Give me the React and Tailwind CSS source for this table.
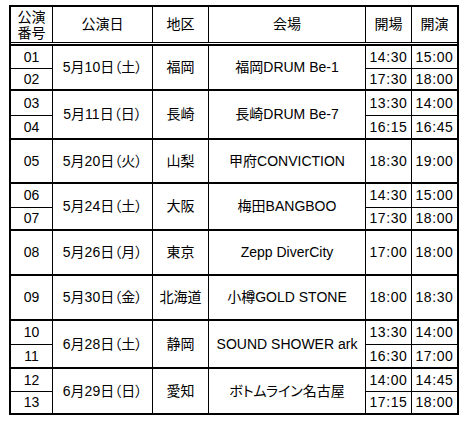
import React from "react";

const groups = [
  { nums: ["01", "02"], date: "5月10日（土）", area: "福岡", venue: "福岡DRUM Be-1", times: [["14:30", "15:00"], ["17:30", "18:00"]], h: [22, 21] },
  { nums: ["03", "04"], date: "5月11日（日）", area: "長崎", venue: "長崎DRUM Be-7", times: [["13:30", "14:00"], ["16:15", "16:45"]], h: [24, 23] },
  { nums: ["05"], date: "5月20日（火）", area: "山梨", venue: "甲府CONVICTION", times: [["18:30", "19:00"]], h: [42] },
  { nums: ["06", "07"], date: "5月24日（土）", area: "大阪", venue: "梅田BANGBOO", times: [["14:30", "15:00"], ["17:30", "18:00"]], h: [23, 22] },
  { nums: ["08"], date: "5月26日（月）", area: "東京", venue: "Zepp DiverCity", times: [["17:00", "18:00"]], h: [43] },
  { nums: ["09"], date: "5月30日（金）", area: "北海道", venue: "小樽GOLD STONE", times: [["18:00", "18:30"]], h: [43] },
  { nums: ["10", "11"], date: "6月28日（土）", area: "静岡", venue: "SOUND SHOWER ark", times: [["13:30", "14:00"], ["16:30", "17:00"]], h: [23, 23] },
  { nums: ["12", "13"], date: "6月29日（日）", area: "愛知", venue: "ボトムライン名古屋", times: [["14:00", "14:45"], ["17:15", "18:00"]], h: [22, 22] },
];

const heightClass = {
  21: "h-[21px]",
  22: "h-[22px]",
  23: "h-[23px]",
  24: "h-[24px]",
  42: "h-[42px]",
  43: "h-[43px]",
};

// stacked sub rows, thin line between them
const SubCells = ({ values, h, className }) => (
  <div className={"flex flex-col " + className}>
    {values.map((v, i) => (
      <div
        key={i}
        className={
          "flex items-center justify-center " +
          heightClass[h[i]] +
          (i > 0 ? " border-t border-black" : "")
        }
      >
        {v}
      </div>
    ))}
  </div>
);

const Group = ({ g }) => (
  <div className="flex border-t-2 border-black">
    <SubCells values={g.nums} h={g.h} className="w-[42px] border-r border-black" />
    <div className="w-[100px] border-r border-black flex items-center justify-center">{g.date}</div>
    <div className="w-[56px] border-r border-black flex items-center justify-center">{g.area}</div>
    <div className="w-[157px] border-r border-black flex items-center justify-center">{g.venue}</div>
    <SubCells
      values={g.times.map((t) => t[0])}
      h={g.h}
      className="w-[46px] border-r border-black tracking-[0.6px]"
    />
    <SubCells values={g.times.map((t) => t[1])} h={g.h} className="w-[45px] tracking-[0.6px]" />
  </div>
);

export default function App() {
  return (
    <div className="min-h-screen bg-white pt-[5px] pl-[9px]">
      <div className="w-[450px] border-2 border-black text-[14px] text-black font-['Liberation_Sans','Noto_Sans_CJK_JP',sans-serif] [font-feature-settings:'palt']">
        <div className="flex h-[36px] border-b border-black">
          <div className="w-[42px] border-r border-black flex flex-col items-center justify-center leading-[16px]">
            <span>公演</span>
            <span>番号</span>
          </div>
          <div className="w-[100px] border-r border-black flex items-center justify-center">公演日</div>
          <div className="w-[56px] border-r border-black flex items-center justify-center">地区</div>
          <div className="w-[157px] border-r border-black flex items-center justify-center">会場</div>
          <div className="w-[46px] border-r border-black flex items-center justify-center">開場</div>
          <div className="w-[45px] flex items-center justify-center">開演</div>
        </div>
        <div className="h-px" />
        {groups.map((g) => (
          <Group key={g.nums[0]} g={g} />
        ))}
      </div>
    </div>
  );
}
